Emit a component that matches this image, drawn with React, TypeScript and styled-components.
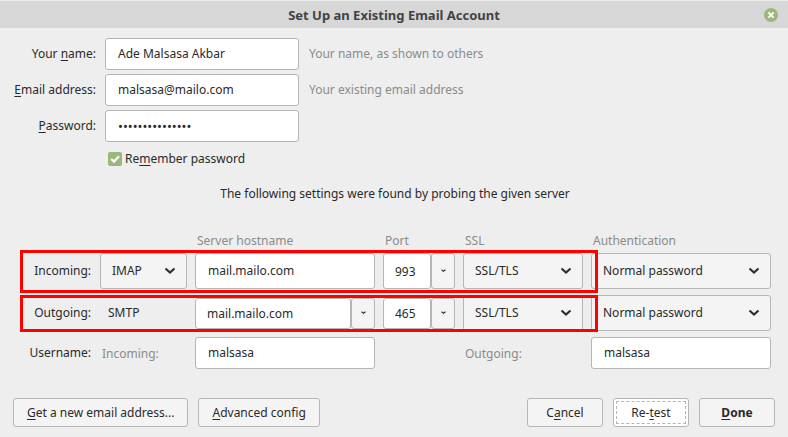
import React from "react";
import styled, { createGlobalStyle } from "styled-components";

const GlobalStyle = createGlobalStyle`
  *, *::before, *::after { box-sizing: border-box; }
  body { margin: 0; background: #eeeeee; }
  body, button, input, select {
    font-family: "Noto Sans", "Open Sans", sans-serif;
    font-size: 12px;
    line-height: 18px;
    color: #2a2a2a;
  }
  u { text-underline-offset: 2px; text-decoration-thickness: 1px; text-decoration-skip-ink: none; }
`;

const Dialog = styled.form`
  display: flex;
  flex-direction: column;
  min-height: 100vh;
  background: #eeeeee;
`;

const TitleBar = styled.header`
  display: grid;
  grid-template-columns: 24px 1fr 24px;
  align-items: center;
  height: 28px;
  padding: 0 8px;
  border-top: 1px solid #ebebeb;
  background: #d7d7d7;
`;

const Title = styled.h1`
  grid-column: 2;
  margin: 0;
  text-align: center;
  font-size: 13px;
  line-height: 20px;
  font-weight: 700;
  color: #434343;
`;

const CloseButton = styled.button`
  display: flex;
  justify-self: end;
  padding: 0;
  margin-right: 2px;
  border: 0;
  background: none;
`;

const Identity = styled.section`
  display: grid;
  grid-template-columns: 97px 194px 1fr;
  column-gap: 8px;
  row-gap: 4px;
  align-items: center;
  padding-top: 10px;
`;

const FieldLabel = styled.label`
  padding-right: 1px;
  text-align: right;
  white-space: nowrap;
`;

const Hint = styled.span`
  padding-left: 2px;
  color: #8b8b8b;
  white-space: nowrap;
`;

const TextBox = styled.input<{ $tall?: boolean }>`
  width: 100%;
  min-width: 0;
  height: ${(p) => (p.$tall ? 36 : 32)}px;
  padding: 0 12px 1px;
  border: 1px solid #b6b6b6;
  border-radius: 3px;
  outline: 0;
  background: #ffffff;
  &[type="password"] { font-size: 13px; }
`;

const Remember = styled.label`
  grid-column: 2;
  display: flex;
  align-items: center;
  gap: 3px;
  padding: 3px 3px 0;
`;

const Tick = styled.span`
  position: relative;
  display: flex;
  width: 14px;
  height: 14px;
`;

const TickInput = styled.input`
  appearance: none;
  width: 14px;
  height: 14px;
  margin: 0;
  border-radius: 2px;
  background: #ffffff;
  box-shadow: inset 0 0 0 1px #b6b6b6;
  &:checked { background: #9ab87c; box-shadow: none; }
  &:not(:checked) + svg { display: none; }
`;

const TickMark = styled.svg`
  position: absolute;
  inset: 0;
  pointer-events: none;
`;

const TickText = styled.span`
  padding-top: 1px;
`;

const Status = styled.p`
  margin: 17px 0 0;
  padding-left: 2px;
  text-align: center;
`;

const Servers = styled.section`
  display: grid;
  grid-template-columns: 91px 87px 1fr 72px 120px 180px;
  grid-template-rows: 14px 36px 36px 32px;
  column-gap: 8px;
  row-gap: 6px;
  align-items: center;
  padding: 30px 17px 0 1px;
`;

const ColumnHead = styled.span<{ $column: number }>`
  grid-row: 1;
  grid-column: ${(p) => p.$column};
  padding: 2px 0 0 2px;
  line-height: 14px;
  color: #8b8b8b;
`;

const Cell = styled.div<{ $row: number; $column: number }>`
  grid-row: ${(p) => p.$row};
  grid-column: ${(p) => p.$column};
  min-width: 0;
`;

const RowLabel = styled.span<{ $row: number }>`
  grid-row: ${(p) => p.$row};
  grid-column: 1;
  padding-right: 1px;
  text-align: right;
`;

const Protocol = styled.div`
  padding: 0 8px;
`;

const SubLabel = styled.label`
  display: block;
  padding: 2px 0 0 2px;
  color: #8b8b8b;
`;

const Highlight = styled.div<{ $row: number }>`
  grid-row: ${(p) => p.$row};
  grid-column: 1 / 6;
  align-self: stretch;
  z-index: 1;
  margin: ${(p) => (p.$row === 2 ? "-3px -15px -4px 19px" : "0 -15px -1px 19px")};
  border: 3px solid #ff0000;
  pointer-events: none;
`;

const SelectFrame = styled.div`
  display: grid;
  align-items: center;
`;

const SelectControl = styled.select`
  grid-area: 1 / 1;
  appearance: none;
  width: 100%;
  height: 36px;
  padding: 0 32px 1px 11px;
  border: 1px solid #b6b6b6;
  border-radius: 3px;
  outline: 0;
  background: #f4f4f4;
`;

const Chevron = styled.svg`
  grid-area: 1 / 1;
  justify-self: end;
  margin-right: 11px;
  pointer-events: none;
`;

const ComboFrame = styled.div<{ $tall?: boolean }>`
  display: grid;
  grid-template-columns: 1fr 24px;
  padding-top: ${(p) => (p.$tall ? 0 : 1)}px;
`;

const ComboInput = styled.input<{ $tall?: boolean }>`
  width: 100%;
  min-width: 0;
  height: ${(p) => (p.$tall ? 36 : 31)}px;
  padding: 0 11px;
  border: 1px solid #b6b6b6;
  border-radius: 3px;
  outline: 0;
  background: #ffffff;
`;

const ComboButton = styled.button`
  display: flex;
  align-items: center;
  justify-content: center;
  padding: 0 0 1px;
  border: 1px solid #b6b6b6;
  border-radius: 3px;
  background: #f4f4f4;
`;

const Footer = styled.footer`
  display: flex;
  gap: 10px;
  margin-top: auto;
  padding: 24px 13px 10px;
`;

const Spacer = styled.span`
  flex: 1;
`;

const PushButton = styled.button<{ $strong?: boolean; $focused?: boolean }>`
  height: 29px;
  min-width: 76px;
  padding: 0 13px;
  border: 1px solid #b6b6b6;
  border-radius: 3px;
  background: ${(p) => (p.$focused ? "#ffffff" : "#f4f4f4")};
  font-weight: ${(p) => (p.$strong ? 700 : 400)};
  white-space: nowrap;
  ${(p) => p.$focused && "outline: 1px dashed #b6b6b6; outline-offset: -4px;"}
`;

function Select({ label, options }: { label: string; options: string[] }) {
  return (
    <SelectFrame>
      <SelectControl aria-label={label} defaultValue={options[0]}>
        {options.map((o) => (
          <option key={o}>{o}</option>
        ))}
      </SelectControl>
      <Chevron width="12" height="8" viewBox="0 0 12 8" aria-hidden="true">
        <path d="M1.5 1.5L6 5.5L10.5 1.5" fill="none" stroke="#303030" strokeWidth="2.2" />
      </Chevron>
    </SelectFrame>
  );
}

function Combo({ label, value, tall }: { label: string; value: string; tall?: boolean }) {
  return (
    <ComboFrame $tall={tall}>
      <ComboInput aria-label={label} defaultValue={value} $tall={tall} />
      <ComboButton type="button" aria-label={`${label} choices`}>
        <svg width="5" height="4" viewBox="0 0 5 4" aria-hidden="true">
          <path d="M0.5 0.7L2.5 2.3L4.5 0.7" fill="none" stroke="#303030" strokeWidth="1.1" />
        </svg>
      </ComboButton>
    </ComboFrame>
  );
}

const sslOptions = ["SSL/TLS", "STARTTLS", "None"];
const authOptions = ["Normal password", "Encrypted password"];

export default function App() {
  return (
    <>
      <GlobalStyle />
      <Dialog onSubmit={(e) => e.preventDefault()}>
        <TitleBar>
          <Title>Set Up an Existing Email Account</Title>
          <CloseButton type="button" aria-label="Close">
            <svg width="14" height="14" viewBox="0 0 14 14" aria-hidden="true">
              <circle cx="7" cy="7" r="7" fill="#9ab87c" />
              <path d="M4.4 4.4L9.6 9.6M9.6 4.4L4.4 9.6" stroke="#ffffff" strokeWidth="2" />
            </svg>
          </CloseButton>
        </TitleBar>

        <Identity>
          <FieldLabel htmlFor="name">Your <u>n</u>ame:</FieldLabel>
          <TextBox id="name" defaultValue="Ade Malsasa Akbar" />
          <Hint>Your name, as shown to others</Hint>
          <FieldLabel htmlFor="email"><u>E</u>mail address:</FieldLabel>
          <TextBox id="email" defaultValue="malsasa@mailo.com" />
          <Hint>Your existing email address</Hint>
          <FieldLabel htmlFor="password"><u>P</u>assword:</FieldLabel>
          <TextBox id="password" type="password" defaultValue="123456789012345" />
          <Remember>
            <Tick>
              <TickInput type="checkbox" defaultChecked />
              <TickMark width="14" height="14" viewBox="0 0 14 14" aria-hidden="true">
                <path d="M3.2 7L6 9.6L11 4.2" fill="none" stroke="#ffffff" strokeWidth="2.2" />
              </TickMark>
            </Tick>
            <TickText>Re<u>m</u>ember password</TickText>
          </Remember>
        </Identity>

        <Status>The following settings were found by probing the given server</Status>

        <Servers>
          <ColumnHead $column={3}>Server hostname</ColumnHead>
          <ColumnHead $column={4}>Port</ColumnHead>
          <ColumnHead $column={5}>SSL</ColumnHead>
          <ColumnHead $column={6}>Authentication</ColumnHead>

          <RowLabel $row={2}>Incoming:</RowLabel>
          <Cell $row={2} $column={2}><Select label="Incoming protocol" options={["IMAP", "POP3"]} /></Cell>
          <Cell $row={2} $column={3}>
            <TextBox $tall aria-label="Incoming server hostname" defaultValue="mail.mailo.com" />
          </Cell>
          <Cell $row={2} $column={4}><Combo tall label="Incoming port" value="993" /></Cell>
          <Cell $row={2} $column={5}><Select label="Incoming SSL" options={sslOptions} /></Cell>
          <Cell $row={2} $column={6}><Select label="Incoming authentication" options={authOptions} /></Cell>

          <RowLabel $row={3}>Outgoing:</RowLabel>
          <Cell $row={3} $column={2}><Protocol>SMTP</Protocol></Cell>
          <Cell $row={3} $column={3}><Combo label="Outgoing server hostname" value="mail.mailo.com" /></Cell>
          <Cell $row={3} $column={4}><Combo label="Outgoing port" value="465" /></Cell>
          <Cell $row={3} $column={5}><Select label="Outgoing SSL" options={sslOptions} /></Cell>
          <Cell $row={3} $column={6}><Select label="Outgoing authentication" options={authOptions} /></Cell>

          <RowLabel $row={4}>Username:</RowLabel>
          <Cell $row={4} $column={2}><SubLabel htmlFor="user-in">Incoming:</SubLabel></Cell>
          <Cell $row={4} $column={3}><TextBox id="user-in" defaultValue="malsasa" /></Cell>
          <Cell $row={4} $column={5}><SubLabel htmlFor="user-out">Outgoing:</SubLabel></Cell>
          <Cell $row={4} $column={6}><TextBox id="user-out" defaultValue="malsasa" /></Cell>

          <Highlight $row={2} />
          <Highlight $row={3} />
        </Servers>

        <Footer>
          <PushButton type="button"><u>G</u>et a new email address...</PushButton>
          <PushButton type="button"><u>A</u>dvanced config</PushButton>
          <Spacer />
          <PushButton type="button">C<u>a</u>ncel</PushButton>
          <PushButton type="button" $focused>Re-<u>t</u>est</PushButton>
          <PushButton type="submit" $strong><u>D</u>one</PushButton>
        </Footer>
      </Dialog>
    </>
  );
}
